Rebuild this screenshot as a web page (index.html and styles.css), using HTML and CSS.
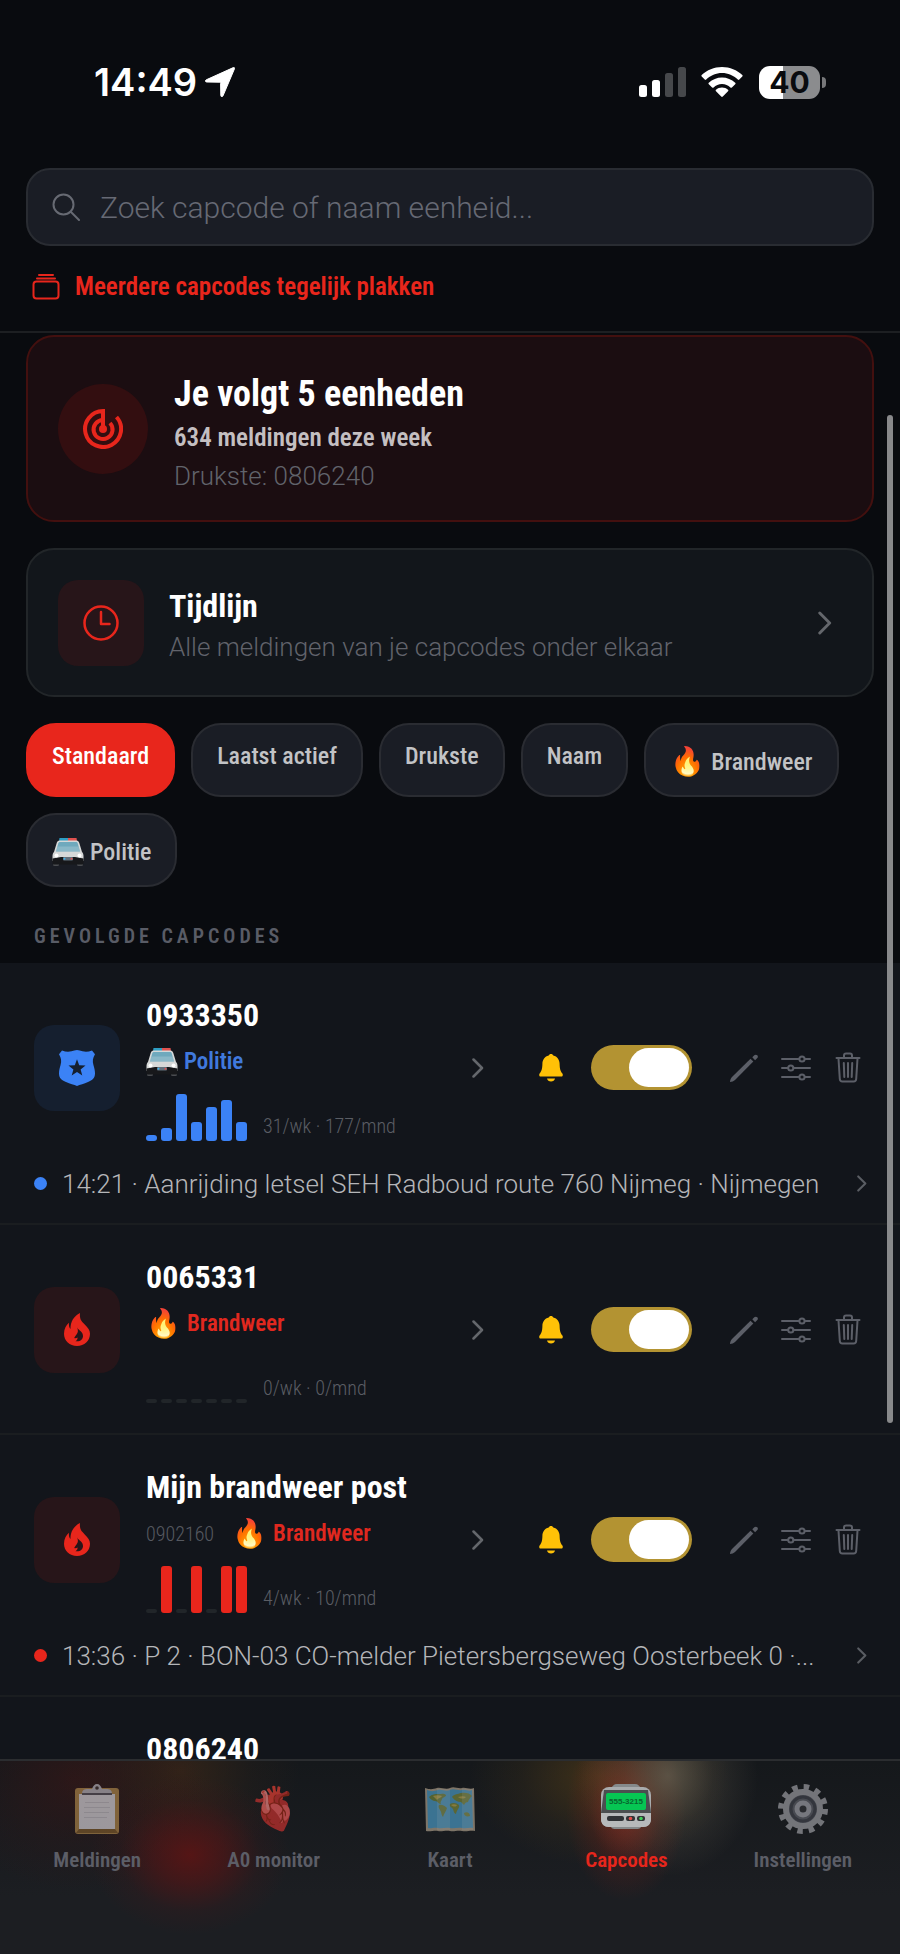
FILE: index.html
```html
<!DOCTYPE html>
<html lang="nl">
<head>
  <meta charset="UTF-8">
  <meta name="viewport" content="width=device-width, initial-scale=1.0">
  <title>Capcodes</title>
  <link rel="stylesheet" href="styles.css">
</head>
<body>

<!-- Shared icons -->
<svg class="sprite" aria-hidden="true">
  <symbol id="i-chevron" viewBox="0 0 12 20">
    <path d="M1.5 1.5 10 10l-8.500 8.500" fill="none" stroke="currentColor" stroke-width="2.500" stroke-linecap="round" stroke-linejoin="round"/>
  </symbol>
  <symbol id="i-bell" viewBox="0 0 24 28">
    <path d="M12 0c1.200 0 2 .6 2.300 1.600 4 .9 6.200 4.300 6.300 8.200.1 5.200.9 7.400 2.800 9.800.9 1.300.3 2.900-1.200 2.900H1.800c-1.500 0-2.100-1.600-1.200-2.900 1.900-2.400 2.700-4.600 2.800-9.800.1-3.900 2.300-7.300 6.300-8.200C10 .6 10.800 0 12 0z"/>
    <path d="M8 24.600h8c-.3 2-2 3-4 3s-3.700-1-4-3z"/>
  </symbol>
  <symbol id="i-pencil" viewBox="0 0 30 30">
    <path d="M1 29c0-1.800.8-3.800 2-5L21.500 5.800l2.800 2.800L6 27c-1.300 1.200-3.200 2-5 2z"/>
    <path d="M23.300 4.300l2-2c.8-.8 2.200-.8 3 0s.8 2 0 2.800l-2.200 2.200z"/>
  </symbol>
  <symbol id="i-sliders" viewBox="0 0 30 26">
    <g fill="none" stroke="currentColor" stroke-width="2" stroke-linecap="round">
      <path d="M1 4h17M24 4h5M1 13h6M12.500 13H29M1 22h17M24 22h5"/>
      <circle cx="21" cy="4" r="2.600"/><circle cx="9.800" cy="13" r="2.600"/><circle cx="21" cy="22" r="2.600"/>
    </g>
  </symbol>
  <symbol id="i-trash" viewBox="0 0 26 31">
    <g fill="none" stroke="currentColor" stroke-width="2" stroke-linecap="round" stroke-linejoin="round">
      <path d="M1.500 6h23M9 5.500V3.500C9 2.300 9.700 1.500 11 1.500h4c1.300 0 2 .8 2 2v2M3.500 6.500l1.300 20.500c.1 1.500 1 2.500 2.600 2.500h11.200c1.600 0 2.500-1 2.600-2.500L22.500 6.500M13 11v14M8.800 11l.5 14M17.200 11l-.5 14"/>
    </g>
  </symbol>
  <symbol id="i-flame" viewBox="0 0 26 33">
    <path fill-rule="evenodd" d="M16 0c-.6 6 1.200 8 4.500 11.200C24 14.600 26 17 26 20.800 26 28 20.300 33 13 33S0 28 0 20.800c0-5 2.200-8.600 5-11-.3 2.600 0 4.800 1.500 6.200C6.300 8.500 10 3 16 0zM13 14.500c1.500 3 1 5-.5 7-1 1.500-2 2.500-2.200 3.500 1 .4 2.200.2 3.200-.5.300 1.500-.5 2.800-2 3.700 4.500.8 7.500-1.700 7.500-5.200 0-4.300-4-5.200-6-8.500z"/>
  </symbol>
  <symbol id="i-badge" viewBox="0 0 36 36">
    <path fill-rule="evenodd" d="M3 .5c3.500 1.400 6.500 1.600 9.500.8C14.500.8 16 .4 18 0c2 .4 3.500.8 5.500 1.300 3 .8 6 .6 9.500-.8l3 3.700c-2.200 3.600-2.800 6.800-1.500 11 .8 2.800 1.500 5 1.500 8 0 5-2.500 6.800-7 8.800-4 1.700-8 2.700-11 4-3-1.300-7-2.300-11-4-4.500-2-7-3.800-7-8.800 0-3 .7-5.200 1.500-8C2.800 11 2.200 7.800 0 4.200zM18 9.300l-2.200 5.900-6.300.3 4.900 3.900-1.700 6.100 5.300-3.500 5.300 3.500-1.700-6.100 4.900-3.900-6.300-.3z"/>
  </symbol>
  <!-- emoji style police car, seen from the front -->
  <symbol id="i-car" viewBox="0 0 32 28">
    <path d="M7.500 0H16v3H7z" fill="#2e9ec4"/><path d="M16 0h8.500l.5 3h-9z" fill="#e0524f"/>
    <rect x="1" y="19" width="6" height="9" rx="1.500" fill="#4a4c50"/><rect x="25" y="19" width="6" height="9" rx="1.500" fill="#4a4c50"/>
    <path d="M7.500 2.500h17c1.500 0 2.300 1 2.800 2.500L30 14c1 1 1.500 2.500 1.500 4v5H.5v-5c0-1.500.5-3 1.500-4l2.700-9c.5-1.500 1.300-2.500 2.800-2.500z" fill="#d6d8d8"/>
    <path d="M8 4h16c1 0 1.500.5 1.800 1.500L28 13.500H4l2.200-8C6.500 4.500 7 4 8 4z" fill="#6fa9bd"/>
    <path d="M5.500 8.500 4 13.500h24l-1.500-5z" fill="#9cc3cf" opacity=".6"/>
    <path d="M.5 20.500 9 19h14l8.500 1.500V25c0 1-.6 1.500-1.500 1.500H2c-.9 0-1.500-.5-1.500-1.500z" fill="#17181b"/>
    <circle cx="4.500" cy="17.500" r="2" fill="#fff"/><circle cx="27.500" cy="17.500" r="2" fill="#fff"/>
    <rect x="11" y="19" width="10" height="3.500" rx="1" fill="#63707c"/><circle cx="12.500" cy="20.700" r="1" fill="#3fb3ea"/><circle cx="19.500" cy="20.700" r="1" fill="#e0524f"/>
  </symbol>
</svg>

<div class="app">

  <div class="status">
    <div class="status-left">
      <span class="time">14:49</span>
      <svg class="location" viewBox="0 0 30 30"><path d="M28.300.6c.9-.4 1.500.2 1.200 1.100L18 28.800c-.6 1.400-2.200 1.200-2.200-.4l-.2-11.900c0-.9-.4-1.300-1.300-1.300l-12.500-.2c-1.600 0-1.900-1.500-.5-2.200z" stroke="currentColor"/></svg>
    </div>
    <div class="status-right">
      <svg class="signal" viewBox="0 0 47 30">
        <rect y="18" width="8" height="12" rx="2.500"/><rect x="13" y="13" width="8" height="17" rx="2.500"/>
        <rect x="26" y="6" width="8" height="24" rx="2.500" opacity=".25"/><rect x="39" width="8" height="30" rx="2.500" opacity=".25"/>
      </svg>
      <svg class="wifi" viewBox="0 0 42 30">
        <path d="M21 0c8 0 15 3 20.300 8 .5.500.5 1 0 1.500l-3 3c-.5.500-1 .5-1.500 0C32.500 8.500 27 6 21 6S9.500 8.500 5.200 12.500c-.5.500-1 .5-1.500 0l-3-3c-.5-.5-.5-1 0-1.500C6 3 13 0 21 0z"/>
        <path d="M21 10.500c5 0 9.700 2 13.200 5.200.5.400.5 1 0 1.500l-3.300 3.200c-.5.500-1 .5-1.500 0C27.200 18.300 24.300 17 21 17s-6.200 1.300-8.400 3.400c-.5.500-1 .5-1.500 0l-3.300-3.200c-.5-.5-.5-1.100 0-1.500 3.500-3.200 8.200-5.200 13.200-5.200z"/>
        <path d="M21 20.500c2.300 0 4.400.8 6 2.200.5.400.5 1 0 1.500l-5.200 5.300c-.5.500-1.100.5-1.600 0L15 24.200c-.5-.5-.5-1.100 0-1.500 1.600-1.400 3.700-2.200 6-2.200z"/>
      </svg>
      <span class="battery">40</span>
    </div>
  </div>

  <header class="top">
    <div class="search">
      <svg class="search-icon" viewBox="0 0 28 28"><g fill="none" stroke="currentColor" stroke-width="2" stroke-linecap="round"><circle cx="11.500" cy="11.500" r="10"/><path d="m19 19 8 8"/></g></svg>
      <input type="text" aria-label="Zoek capcode" placeholder="Zoek capcode of naam eenheid...">
    </div>
    <button class="paste">
      <svg class="paste-icon" viewBox="0 0 28 26"><g fill="none" stroke="currentColor" stroke-width="2" stroke-linecap="round"><path d="M7 1h14M5 4.500h18"/><rect x="1.500" y="7.500" width="25" height="17" rx="3"/></g></svg>
      Meerdere capcodes tegelijk plakken
    </button>
  </header>

  <main class="content">
    <div class="scroll">
      <section class="card summary">
        <span class="round-icon">
          <svg viewBox="0 0 40 40"><g fill="none" stroke="currentColor" stroke-width="4"><path d="M20 20V2A18 18 0 1 0 33.500 8"/><path d="M20 11a9.500 9.500 0 1 0 7 3"/></g><circle cx="20" cy="20" r="4" fill="currentColor"/></svg>
        </span>
        <div class="card-text">
          <h1>Je volgt 5 eenheden</h1>
          <p class="week">634 meldingen deze week</p>
          <p class="muted">Drukste: 0806240</p>
        </div>
      </section>

      <a class="card timeline" href="#">
        <span class="tile fire">
          <svg class="clock" viewBox="0 0 36 36"><g fill="none" stroke="currentColor" stroke-width="2.500" stroke-linecap="round" stroke-linejoin="round"><circle cx="18" cy="18" r="16.500"/><path d="M18 7v12h8.500"/></g></svg>
        </span>
        <div class="card-text">
          <h2>Tijdlijn</h2>
          <p class="muted">Alle meldingen van je capcodes onder elkaar</p>
        </div>
        <svg class="chevron big"><use href="#i-chevron"/></svg>
      </a>

      <div class="chips">
        <button class="chip active">Standaard</button>
        <button class="chip">Laatst actief</button>
        <button class="chip">Drukste</button>
        <button class="chip">Naam</button>
        <button class="chip emoji-chip"><span class="emoji">🔥</span> Brandweer</button>
        <button class="chip emoji-chip"><svg class="car"><use href="#i-car"/></svg> Politie</button>
      </div>

      <h3 class="label">Gevolgde capcodes</h3>

      <article class="unit">
        <div class="unit-main">
          <span class="tile police"><svg class="badge"><use href="#i-badge"/></svg></span>
          <div class="info">
            <h2 class="name">0933350</h2>
            <p class="service blue"><svg class="car"><use href="#i-car"/></svg> Politie</p>
            <div class="stats">
              <div class="bars blue"><i style="height:6px"></i><i style="height:13px"></i><i style="height:47px"></i><i style="height:19px"></i><i style="height:34px"></i><i style="height:41px"></i><i style="height:19px"></i></div>
              <span class="count">31/wk · 177/mnd</span>
            </div>
          </div>
          <svg class="chevron"><use href="#i-chevron"/></svg>
          <svg class="bell"><use href="#i-bell"/></svg>
          <input class="toggle" type="checkbox" aria-label="Meldingen voor 0933350" checked>
          <div class="actions">
            <button aria-label="Bewerken"><svg class="pencil"><use href="#i-pencil"/></svg></button>
            <button aria-label="Filters"><svg class="sliders"><use href="#i-sliders"/></svg></button>
            <button aria-label="Verwijderen"><svg class="trash"><use href="#i-trash"/></svg></button>
          </div>
        </div>
        <a class="message" href="#">
          <span class="dot blue"></span>
          <span class="message-text">14:21 · Aanrijding letsel SEH Radboud route 760 Nijmeg · Nijmegen</span>
          <svg class="chevron small"><use href="#i-chevron"/></svg>
        </a>
      </article>

      <article class="unit">
        <div class="unit-main">
          <span class="tile fire"><svg class="flame"><use href="#i-flame"/></svg></span>
          <div class="info">
            <h2 class="name">0065331</h2>
            <p class="service red"><span class="emoji">🔥</span> Brandweer</p>
            <div class="stats">
              <div class="bars red"><i class="empty"></i><i class="empty"></i><i class="empty"></i><i class="empty"></i><i class="empty"></i><i class="empty"></i><i class="empty"></i></div>
              <span class="count">0/wk · 0/mnd</span>
            </div>
          </div>
          <svg class="chevron"><use href="#i-chevron"/></svg>
          <svg class="bell"><use href="#i-bell"/></svg>
          <input class="toggle" type="checkbox" aria-label="Meldingen voor 0065331" checked>
          <div class="actions">
            <button aria-label="Bewerken"><svg class="pencil"><use href="#i-pencil"/></svg></button>
            <button aria-label="Filters"><svg class="sliders"><use href="#i-sliders"/></svg></button>
            <button aria-label="Verwijderen"><svg class="trash"><use href="#i-trash"/></svg></button>
          </div>
        </div>
      </article>

      <article class="unit">
        <div class="unit-main">
          <span class="tile fire"><svg class="flame"><use href="#i-flame"/></svg></span>
          <div class="info">
            <h2 class="name">Mijn brandweer post</h2>
            <p class="service red"><span class="code">0902160</span><span class="emoji">🔥</span> Brandweer</p>
            <div class="stats">
              <div class="bars red"><i class="empty"></i><i style="height:47px"></i><i class="empty"></i><i style="height:47px"></i><i class="empty"></i><i style="height:47px"></i><i style="height:47px"></i></div>
              <span class="count">4/wk · 10/mnd</span>
            </div>
          </div>
          <svg class="chevron"><use href="#i-chevron"/></svg>
          <svg class="bell"><use href="#i-bell"/></svg>
          <input class="toggle" type="checkbox" aria-label="Meldingen voor Mijn brandweer post" checked>
          <div class="actions">
            <button aria-label="Bewerken"><svg class="pencil"><use href="#i-pencil"/></svg></button>
            <button aria-label="Filters"><svg class="sliders"><use href="#i-sliders"/></svg></button>
            <button aria-label="Verwijderen"><svg class="trash"><use href="#i-trash"/></svg></button>
          </div>
        </div>
        <a class="message" href="#">
          <span class="dot red"></span>
          <span class="message-text">13:36 · P 2 · BON-03 CO-melder Pietersbergseweg Oosterbeek 0 ·...</span>
          <svg class="chevron small"><use href="#i-chevron"/></svg>
        </a>
      </article>

      <article class="unit next">
        <h2 class="name">0806240</h2>
      </article>
    </div>
    <span class="scrollbar"></span>
  </main>

  <nav class="tabs">
    <a class="tab" href="#">
      <svg class="tab-icon" viewBox="0 0 50 50">
        <rect x="3" y="4" width="44" height="46" rx="3" fill="#b08a4c"/>
        <path d="M7 10h36v35H7z" fill="#dcdce2"/><path d="M7 45h36l3 4H4z" fill="#7d5c2c"/>
        <path d="M13 18h24v1H13zm-1 5h26v1H12zm0 5h25v1H12zm0 5h23v1H12z" fill="#c4c4cc"/>
        <path d="M10 10c0-4 2-5 6-5h4c1-3 2.500-5 5-5s4 2 5 5h4c4 0 6 1 6 5z" fill="#b9b9c2"/><path d="M10 9h30v2H10z" fill="#54545e"/>
        <circle cx="25" cy="4" r="1.800" fill="#3a3232"/>
      </svg>
      <span>Meldingen</span>
    </a>
    <a class="tab" href="#">
      <span class="tab-emoji">🫀</span>
      <span>A0 monitor</span>
    </a>
    <a class="tab" href="#">
      <svg class="tab-icon" viewBox="0 0 50 50">
        <path d="M0 4c6 2 8 1 12 0s9 2 13 0 8 1 12 0 8 2 12 0l1 43c-5-1-8 1-13 0s-8 1-12 0-9 1-12 0-8 1-12 0z" fill="#b5a690"/>
        <path d="M2 6c5 2 7 1 11 0s8 2 12 0 8 1 12 0 7 2 10 0l1 38c-4-1-7 1-11 0s-8 1-12 0-8 1-12 0-7 1-10 0z" fill="#4fa3d0"/>
        <path d="M4 13c3-3 6-3 9-3s6-1 8 1c0 2-3 2-4 4-1 3-2 3-1 5-3 0-3-3-6-3-2 0-5-2-6-4zM14 21c3-1 6 1 8 3-1 4-3 5-4 9-2-2-1-4-3-7-1-2-2-3-1-5z" fill="#74893d"/>
        <path d="M27 13c2-3 6-3 9-4 4-1 9 0 11 3-2 2-3 3-4 6-2 0-3 1-4 3l-3-3c-3 0-6-1-9-5zM25 20c3-2 7-1 9 1 1 3-2 4-3 9-3-1-2-5-4-6-1-1-3-2-2-4zM39 29c3-2 6 0 6 3-3 1-6 0-6-3z" fill="#7f8f3f"/>
        <path d="M8 12c3-1 6-1 9 0-1 2-4 2-5 4zM26 21c2-1 4-1 6 0-1 2-3 2-6 0zM33 13c3-1 6-1 8 0-2 2-5 2-8 0z" fill="#c2b054"/>
        <path d="M12 5h13v41H12zM37 5h11v41H37z" fill="#fff" opacity=".14"/>
      </svg>
      <span>Kaart</span>
    </a>
    <a class="tab active" href="#">
      <svg class="tab-icon" viewBox="0 0 50 50">
        <path d="M10 5c1-3 3-5 6-5h18c3 0 5 2 6 5zM10 42h30v1c-1 2-3 2-5 2H15c-2 0-4 0-5-2z" fill="#85898b"/>
        <rect y="3" width="50" height="40" rx="8" fill="#a8abad"/>
        <path d="M3 6h44l3 23H0z" fill="#4b4e50"/>
        <path d="M0 29h50v6c0 5-3 8-8 8H8c-5 0-8-3-8-8z" fill="#b7b9bb"/>
        <rect x="5" y="9" width="40" height="17" rx="2" fill="#06c653"/>
        <text x="25" y="20" class="pager-text">555-3215</text>
        <rect x="6" y="32" width="17" height="5" rx="2" fill="#303236"/><rect x="25" y="32" width="9" height="5" rx="2" fill="#303236"/><rect x="36" y="32" width="8" height="5" rx="2" fill="#303236"/>
        <circle cx="29.500" cy="34.500" r="1.800" fill="#e04a48"/><circle cx="40" cy="34.500" r="1.800" fill="#3fd05a"/>
      </svg>
      <span>Capcodes</span>
    </a>
    <a class="tab" href="#">
      <svg class="tab-icon" viewBox="0 0 50 50">
        <circle cx="25" cy="25" r="22" fill="none" stroke="#a5a5ab" stroke-width="6" stroke-dasharray="5.500 6.019"/>
        <circle cx="25" cy="25" r="17" fill="#63656e" stroke="#a5a5ab" stroke-width="6"/>
        <circle cx="25" cy="25" r="12" fill="none" stroke="#43454f" stroke-width="3"/>
        <circle cx="25" cy="25" r="6" fill="#34353a" stroke="#a9aab2" stroke-width="5"/>
      </svg>
      <span>Instellingen</span>
    </a>
  </nav>
</div>

</body>
</html>
```
FILE: styles.css
```css
* {
  box-sizing: border-box;
}

body {
  margin: 0;
  background: #090b0f;
  color: #fff;
  font-family: Roboto, "Liberation Sans", sans-serif;
}

h1, h2, h3, p {
  margin: 0;
}

a {
  color: inherit;
  text-decoration: none;
}

button {
  border: none;
  background: none;
  padding: 0;
  color: inherit;
  font-family: inherit;
}

svg {
  display: block;
  flex: none;
  fill: currentColor;
}

.sprite {
  display: none;
}

.app {
  height: 100vh;
  display: flex;
  flex-direction: column;
}

/* Status bar */
.status {
  flex: none;
  display: flex;
  justify-content: space-between;
  align-items: center;
  padding: 59px 74px 63px 94px;
}

.status-left,
.status-right {
  display: flex;
  align-items: center;
}

.time {
  font-family: Inter, sans-serif;
  font-weight: 600;
  font-size: 38px;
  line-height: 46px;
}

.location {
  width: 30px;
  height: 30px;
  margin-left: 8px;
}

.signal {
  width: 47px;
  height: 30px;
}

.wifi {
  width: 42px;
  height: 30px;
  margin: 0 16px 0 15px;
}

.battery {
  position: relative;
  width: 61px;
  height: 33px;
  margin-right: 6px;
  border-radius: 11px;
  background: linear-gradient(90deg, #fff 40%, #8b8c8e 40%);
  color: #090b0f;
  font-family: Inter, sans-serif;
  font-weight: 700;
  font-size: 30px;
  line-height: 33px;
  text-align: center;
}

.battery::after {
  content: "";
  position: absolute;
  right: -6px;
  top: 11px;
  width: 4px;
  height: 11px;
  border-radius: 0 4px 4px 0;
  background: #77787a;
}

/* Search header */
.top {
  flex: none;
  padding: 0 26px 25px;
  border-bottom: 2px solid #1d1f22;
}

.search {
  display: flex;
  align-items: center;
  gap: 20px;
  height: 78px;
  padding: 0 24px;
  border: 2px solid #292c32;
  border-radius: 24px;
  background: #1a1d25;
  color: #676a73;
}

.search-icon {
  width: 28px;
  height: 28px;
}

.search input {
  flex: 1;
  min-width: 0;
  padding: 0;
  border: none;
  outline: none;
  background: none;
  color: #fff;
  font-family: inherit;
  font-weight: 300;
  font-size: 30px;
}

.search input::placeholder {
  color: #666974;
}

.paste {
  display: flex;
  align-items: center;
  gap: 15px;
  margin-top: 22px;
  padding: 0 6px;
  color: #e8261c;
  font-family: "Roboto Condensed", Roboto, sans-serif;
  font-weight: 600;
  font-size: 25px;
  line-height: 38px;
}

.paste-icon {
  width: 28px;
  height: 26px;
}

/* Scrolling content */
.content {
  position: relative;
  flex: 1;
  min-height: 0;
}

.scroll {
  height: 100%;
  overflow: hidden;
  padding-top: 2px;
}

.scrollbar {
  position: absolute;
  right: 7px;
  top: 82px;
  width: 6px;
  height: 70.7%;
  border-radius: 3px;
  background: #88898b;
}

.card {
  display: flex;
  align-items: center;
  margin: 0 26px;
  padding: 0 30px;
  border: 2px solid #222629;
  border-radius: 28px;
  background: #12161b;
}

.card-text {
  flex: 1;
  padding-top: 6px;
}

.summary {
  gap: 26px;
  height: 187px;
  margin-bottom: 26px;
  border-color: #43100f;
  background: #1b0d11;
}

.round-icon {
  display: grid;
  place-items: center;
  width: 90px;
  height: 90px;
  border-radius: 50%;
  background: #330e10;
  color: #e8261c;
}

.round-icon svg {
  width: 40px;
  height: 40px;
}

h1,
h2,
.week,
.service,
.count,
.chip,
.label,
.tab {
  font-family: "Roboto Condensed", Roboto, sans-serif;
}

h1 {
  font-weight: 700;
  font-size: 36px;
  line-height: 48px;
}

h2 {
  font-weight: 700;
  font-size: 32px;
  line-height: 42px;
}

.week {
  color: #c4bfc1;
  font-weight: 600;
  font-size: 25px;
  line-height: 40px;
}

.muted {
  color: #61636b;
  font-weight: 300;
  font-size: 26px;
  line-height: 36px;
}

.timeline {
  gap: 25px;
  height: 149px;
}

.timeline .muted {
  line-height: 40px;
}

.tile {
  display: grid;
  place-items: center;
  flex: none;
  width: 86px;
  height: 86px;
  border-radius: 20px;
}

.fire {
  background: #271519;
  color: #e8261c;
}

.police {
  background: #151f2f;
  color: #3b82f6;
}

.clock {
  width: 36px;
  height: 36px;
}

.chevron {
  width: 12px;
  height: 20px;
  color: #64676c;
}

.chevron.big {
  width: 14px;
  height: 24px;
  margin-right: 10px;
}

.chevron.small {
  width: 10px;
  height: 17px;
  color: #5a5d63;
}

/* Filter chips */
.chips {
  display: flex;
  flex-wrap: wrap;
  gap: 16px;
  padding: 26px 26px 0;
}

.chip {
  display: flex;
  align-items: center;
  gap: 6px;
  height: 74px;
  padding: 0 24px 8px;
  border: 2px solid #2a2c32;
  border-radius: 30px;
  background: #1a1d25;
  color: #c2c3c6;
  font-weight: 500;
  font-size: 24px;
}

.emoji-chip {
  padding-top: 4px;
  padding-bottom: 0;
}

.chip.active {
  border-color: #e8261c;
  background: #e8261c;
  color: #fff;
}

.emoji {
  font-size: 28px;
  line-height: 32px;
}

.car {
  width: 32px;
  height: 28px;
}

.label {
  padding: 34px 34px 12px;
  color: #595c66;
  font-weight: 600;
  font-size: 20px;
  line-height: 30px;
  letter-spacing: 4px;
  text-transform: uppercase;
}

/* Followed units */
.unit {
  border-bottom: 2px solid #1a1d20;
  background: #12151b;
}

.unit-main {
  display: flex;
  align-items: center;
  padding: 31px 36px 30px 34px;
}

.info {
  flex: 1;
  margin-left: 26px;
}

.service {
  display: flex;
  align-items: center;
  gap: 6px;
  margin-top: 8px;
  font-weight: 600;
  font-size: 23px;
  line-height: 36px;
}

.service.blue {
  color: #4079dd;
}

.service.red {
  color: #e0281f;
}

.code {
  margin-right: 12px;
  color: #565960;
  font-weight: 300;
  font-size: 20px;
}

.stats {
  display: flex;
  align-items: flex-end;
  gap: 16px;
  margin-top: 14px;
}

.bars {
  display: flex;
  align-items: flex-end;
  gap: 4px;
  height: 47px;
}

.bars i {
  width: 11px;
  border-radius: 3px;
  background: #3b82f6;
}

.bars.red i {
  background: #e8261c;
}

.bars i.empty {
  height: 4px;
  background: #212529;
}

.count {
  color: #5a5d64;
  font-weight: 300;
  font-size: 20px;
  line-height: 30px;
}

.badge {
  width: 36px;
  height: 36px;
}

.flame {
  width: 26px;
  height: 33px;
}

.bell {
  width: 24px;
  height: 28px;
  margin-left: 55px;
  color: #ffc107;
}

.toggle {
  appearance: none;
  display: flex;
  justify-content: flex-end;
  width: 101px;
  height: 45px;
  margin: 0 36px 0 28px;
  padding: 3px;
  border-radius: 23px;
  background: #b39332;
}

.toggle::before {
  content: "";
  width: 60px;
  border-radius: 20px;
  background: #fff;
}

.toggle:not(:checked) {
  justify-content: flex-start;
  background: #33363c;
}

.actions {
  display: flex;
  gap: 20px;
}

.actions button {
  display: grid;
  place-items: center;
  width: 32px;
  height: 45px;
  color: #5c5f68;
}

.pencil {
  width: 30px;
  height: 30px;
}

.sliders {
  width: 30px;
  height: 26px;
}

.trash {
  width: 26px;
  height: 31px;
}

.message {
  display: flex;
  align-items: center;
  margin-top: -6px;
  padding: 0 33px 22px 34px;
}

.dot {
  width: 13px;
  height: 13px;
  margin-right: 15px;
  border-radius: 50%;
  background: #3b82f6;
}

.dot.red {
  background: #e8261c;
}

.message-text {
  flex: 1;
  min-width: 0;
  padding-top: 2px;
  overflow: hidden;
  color: #b5b6b9;
  font-weight: 300;
  font-size: 26px;
  line-height: 34px;
  white-space: nowrap;
}

.next {
  height: 209px;
  padding: 31px 34px 0 146px;
}

.tabs {
  flex: none;
  display: flex;
  height: 195px;
  padding: 21px 9px 0;
  border-top: 2px solid #2b2d30;
  background:
    radial-gradient(100px 80px at 190px 94px, rgba(88, 21, 21, .95), rgba(88, 21, 21, .6) 35%, rgba(88, 21, 21, .15) 70%, transparent),
    radial-gradient(130px 110px at 75px 20px, rgba(58, 22, 22, .6), rgba(58, 22, 22, .2) 60%, transparent),
    radial-gradient(120px 90px at 180px 10px, rgba(56, 38, 24, .8), rgba(56, 38, 24, .2) 60%, transparent),
    radial-gradient(90px 100px at 668px 15px, rgba(105, 97, 82, .75), rgba(105, 97, 82, .25) 50%, transparent),
    radial-gradient(60px 90px at 626px 50px, rgba(140, 34, 24, .8), rgba(140, 34, 24, .2) 60%, transparent),
    radial-gradient(130px 90px at 600px 15px, rgba(82, 60, 24, .7), rgba(82, 60, 24, .2) 60%, transparent),
    linear-gradient(#15181b, #1c1e22 70%);
}

.tab {
  flex: 1;
  display: flex;
  flex-direction: column;
  align-items: center;
  color: #5c5e67;
  font-weight: 600;
  font-size: 21px;
  line-height: 32px;
}

.tab-icon,
.tab-emoji {
  width: 50px;
  height: 50px;
  margin: 2px 0 10px;
  opacity: .65;
}

.tab-emoji {
  font-size: 42px;
  line-height: 50px;
  text-align: center;
}

.tab.active {
  color: #e8261c;
}

.active .tab-icon {
  opacity: 1;
}

.pager-text {
  fill: #08652f;
  font-family: "Liberation Sans", sans-serif;
  font-weight: 700;
  font-size: 8px;
  text-anchor: middle;
}
```
